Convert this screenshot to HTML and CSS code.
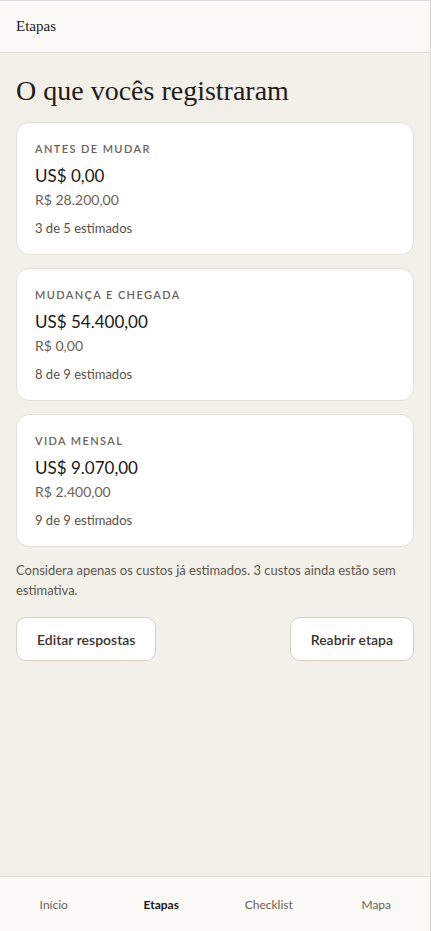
FILE: index.html
```html
<!DOCTYPE html>
<html lang="pt-BR">
<head>
<meta charset="utf-8">
<meta name="viewport" content="width=device-width, initial-scale=1">
<title>Etapas</title>
<link rel="stylesheet" href="styles.css">
</head>
<body>
<div class="app">
  <header class="topbar">Etapas</header>
  <main class="content">
    <h1 class="title">O que vocês registraram</h1>
    <section class="card">
      <div class="card-label">ANTES DE MUDAR</div>
      <div class="card-usd">US$ 0,00</div>
      <div class="card-brl">R$ 28.200,00</div>
      <div class="card-count">3 de 5 estimados</div>
    </section>
    <section class="card">
      <div class="card-label">MUDANÇA E CHEGADA</div>
      <div class="card-usd">US$ 54.400,00</div>
      <div class="card-brl">R$ 0,00</div>
      <div class="card-count">8 de 9 estimados</div>
    </section>
    <section class="card">
      <div class="card-label">VIDA MENSAL</div>
      <div class="card-usd">US$ 9.070,00</div>
      <div class="card-brl">R$ 2.400,00</div>
      <div class="card-count">9 de 9 estimados</div>
    </section>
    <p class="note">Considera apenas os custos já estimados. 3 custos ainda estão sem estimativa.</p>
    <div class="actions">
      <button class="btn" type="button">Editar respostas</button>
      <button class="btn" type="button">Reabrir etapa</button>
    </div>
  </main>
  <nav class="tabbar">
    <a class="tab">Início</a>
    <a class="tab active">Etapas</a>
    <a class="tab">Checklist</a>
    <a class="tab">Mapa</a>
  </nav>
</div>
</body>
</html>
```
FILE: styles.css
```css
* { box-sizing: border-box; }
html, body { margin: 0; padding: 0; height: 100%; }
body {
  font-family: "Segoe UI", "Lato", "Noto Sans", sans-serif;
  background: #f3f0ea;
  color: #1f1b16;
}
.app {
  height: 931px;
  display: flex;
  flex-direction: column;
  border-top: 1px solid #dcdcdf;
  border-right: 1px solid #dcdcdf;
}
.topbar {
  height: 52px;
  flex: none;
  background: #fbfaf7;
  border-bottom: 1px solid #e2ddd3;
  font-family: "Liberation Serif", "DejaVu Serif", serif;
  font-size: 15px;
  padding-left: 16px;
  display: flex;
  align-items: center;
  color: #1f1b16;
}
.content {
  flex: 1;
  padding: 21px 16px 0 16px;
  display: flex;
  flex-direction: column;
}
.title {
  margin: 0 0 14px 0;
  font-family: "Liberation Serif", "DejaVu Serif", serif;
  font-weight: normal;
  font-size: 28px;
  line-height: 34px;
  color: #1f1b16;
}
.card {
  background: #ffffff;
  border: 1px solid #e4dfd5;
  border-radius: 13px;
  padding: 18px 18px 17px 18px;
  margin-bottom: 13px;
  display: flex;
  flex-direction: column;
}
.card-label {
  font-size: 11px;
  line-height: 15px;
  letter-spacing: 1.4px;
  color: #6b6258;
  font-weight: 600;
}
.card-usd {
  margin-top: 8px;
  font-size: 17px;
  line-height: 24px;
  color: #1a1714;
}
.card-brl {
  margin-top: 2px;
  font-size: 14px;
  line-height: 20px;
  color: #6e5f51;
}
.card-count {
  margin-top: 9px;
  font-size: 13px;
  line-height: 18px;
  color: #595048;
}
.note {
  margin: 0;
  font-size: 13px;
  line-height: 20px;
  color: #5f564d;
}
.actions {
  margin-top: 17px;
  display: flex;
  justify-content: space-between;
}
.btn {
  height: 44px;
  padding: 0 20px;
  background: #ffffff;
  border: 1px solid #d7cfc2;
  border-radius: 10px;
  font-family: inherit;
  font-size: 14px;
  font-weight: 600;
  color: #3a322b;
}
.tabbar {
  height: 55px;
  flex: none;
  background: #fbfaf7;
  border-top: 1px solid #e2ddd3;
  display: grid;
  grid-template-columns: repeat(4, 1fr);
  align-items: center;
}
.tab {
  text-align: center;
  font-size: 12px;
  color: #6b6259;
}
.tab.active {
  font-weight: 700;
  color: #1a1714;
}
```
